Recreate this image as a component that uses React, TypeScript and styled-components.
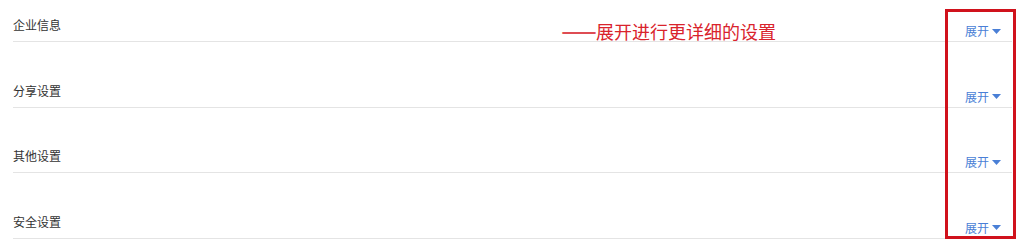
import styled, { createGlobalStyle } from 'styled-components';

const sections = ['企业信息', '分享设置', '其他设置', '安全设置'];

const GlobalStyle = createGlobalStyle`
  html, body {
    margin: 0;
    padding: 0;
    background: #fff;
  }
  body {
    font-family: "Microsoft YaHei", "Noto Sans CJK SC", "Liberation Sans", sans-serif;
  }
`;

const App = () => (
  <>
    <GlobalStyle />
    <Page>
      {sections.map((title) => (
        <Section key={title}>
          <Title>{title}</Title>
          <Toggle type="button">
            展开
            <Caret viewBox="0 0 9 5" aria-hidden="true">
              <path d="M0 0h9L4.5 5z" />
            </Caret>
          </Toggle>
        </Section>
      ))}
      <Note lang="zh-CN">
        <Dash>——</Dash>展开进行更详细的设置
      </Note>
      <Highlight />
    </Page>
  </>
);

export default App;

const Page = styled.div`
  position: relative;
  display: flex;
  flex-direction: column;
  gap: 23.5px;
  padding: 0 12px 0 13px;
  height: 245px;
  box-sizing: border-box;
`;

const Section = styled.div`
  display: flex;
  align-items: flex-end;
  justify-content: space-between;
  height: 42px;
  box-sizing: border-box;
  border-bottom: 1px solid #e4e4e4;
`;

const Title = styled.span`
  font-size: 12px;
  line-height: 12px;
  color: #333;
  padding-bottom: 10px;
`;

const Toggle = styled.button`
  display: flex;
  align-items: center;
  gap: 3px;
  border: none;
  background: none;
  padding: 0 11px 4px 0;
  font: inherit;
  font-size: 12px;
  line-height: 12px;
  color: #4a7fd6;
  cursor: pointer;
`;

const Caret = styled.svg`
  width: 9px;
  height: 5px;
  fill: #4a7fd6;
`;

const Note = styled.div`
  position: absolute;
  left: 561px;
  top: 21px;
  font-family: "Noto Sans CJK SC", sans-serif;
  font-size: 18px;
  line-height: 20px;
  color: #d9232c;
  white-space: nowrap;
`;

const Dash = styled.span`
  font-feature-settings: "fwid" 1;
  font-weight: 700;
  letter-spacing: -1px;
  text-shadow: 0 0.8px 0 currentColor;
`;

const Highlight = styled.div`
  position: absolute;
  left: 945px;
  top: 9px;
  width: 71px;
  height: 230px;
  box-sizing: border-box;
  border: 3px solid #d0121c;
  pointer-events: none;
`;
